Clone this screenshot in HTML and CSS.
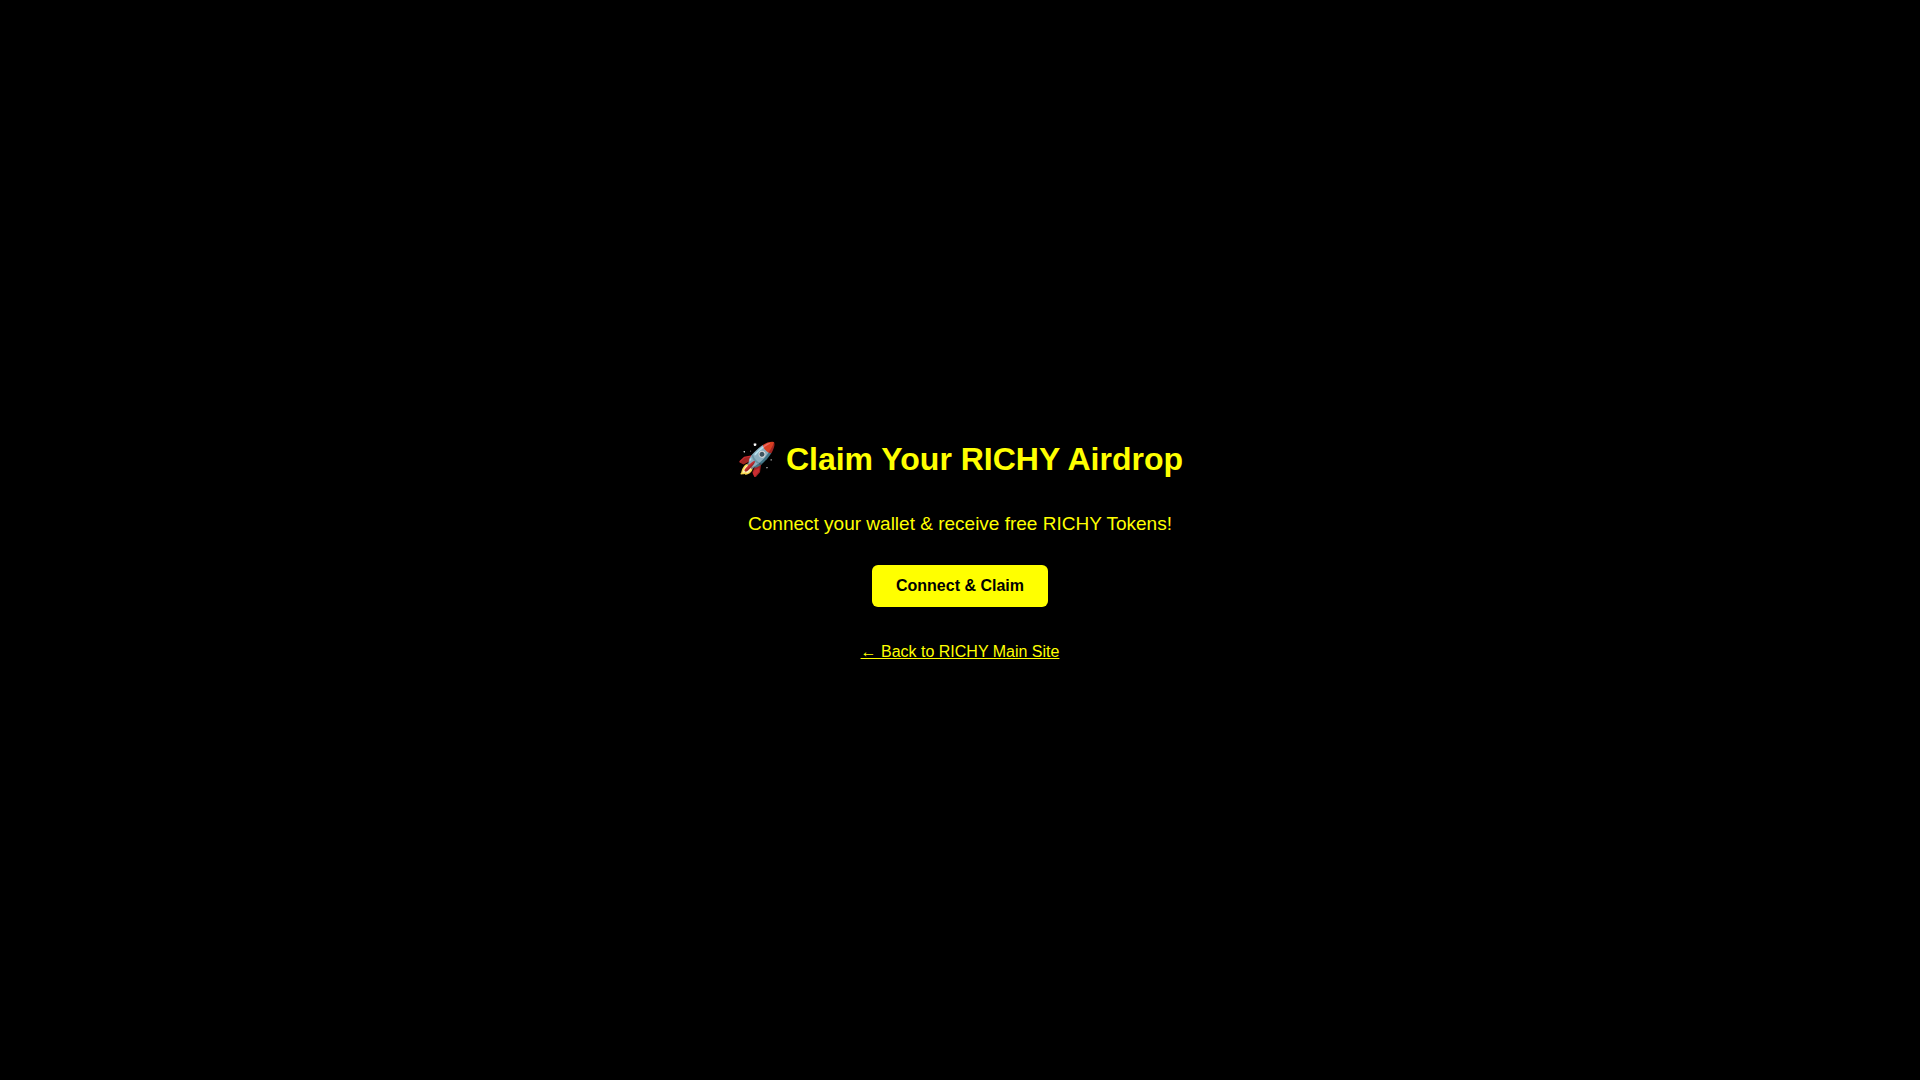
FILE: index.html
```html
<!DOCTYPE html>
<html lang="en">
<head>
    <meta charset="UTF-8">
    <meta name="viewport" content="width=device-width, initial-scale=1.0">
    <title>RICHY Airdrop</title>
    <link rel="stylesheet" href="styles.css">
</head>
<body>
    <h1>🚀 Claim Your RICHY Airdrop</h1>
    <p>Connect your wallet &amp; receive free RICHY Tokens!</p>
    <button type="button" class="claim-btn">Connect &amp; Claim</button>
    <a href="#" class="back-link">← Back to RICHY Main Site</a>
</body>
</html>
```

FILE: styles.css
```css
body {
    background-color: #000;
    color: #ff0;
    font-family: "Liberation Sans", Arial, sans-serif;
    display: flex;
    flex-direction: column;
    align-items: center;
    justify-content: center;
    min-height: 100vh;
    margin: 0;
    text-align: center;
}

h1 {
    font-size: 32px;
    margin: 20px 0;
}

p {
    font-size: 19px;
    margin: 15px 0 30px;
}

.claim-btn {
    background-color: #ff0;
    color: #000;
    font-family: inherit;
    font-size: 16px;
    font-weight: bold;
    padding: 12px 24px;
    border: none;
    border-radius: 6px;
    cursor: pointer;
}

.back-link {
    color: #ff0;
    margin-top: 36px;
}
```
